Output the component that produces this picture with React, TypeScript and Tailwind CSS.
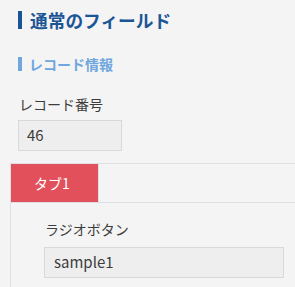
import React from "react";

const font = { fontFamily: '"Noto Sans CJK JP", "Noto Sans", sans-serif' };

export default function App() {
  return (
    <div
      className="w-[295px] h-[287px] overflow-hidden bg-[#f4f4f4] pl-[18px] pt-[11px] text-[#3c3c3c]"
      style={font}
    >
      <div className="flex items-center h-[18px]">
        <div className="w-[4px] h-[18px] bg-[#1b5596]" />
        <div className="ml-[8px] text-[17.7px] leading-[18px] font-bold text-[#1b5596] whitespace-nowrap">
          通常のフィールド
        </div>
      </div>
      <div className="flex items-center h-[14px] mt-[28px]">
        <div className="w-[4px] h-[14px] bg-[#6fa6dd]" />
        <div className="ml-[7px] text-[14px] leading-[14px] font-bold text-[#6fa6dd] whitespace-nowrap">
          レコード情報
        </div>
      </div>
      <div className="mt-[23px] ml-px text-[14px] leading-[20px] text-[#3c3c3c]">レコード番号</div>
      <div className="mt-[6px] w-[104px] h-[31px] border border-[#d9d9d9] bg-[#eeeeee] pl-[8px] flex items-center text-[15px] text-[#3c3c3c]">
        46
      </div>
      <div className="mt-[12px] -ml-[8px] w-[320px] h-[200px] border border-[#dfe0e6]">
        <div className="flex border-b border-[#dfe0e6]">
          <div className="w-[82px] h-[38px] bg-[#e2515b] text-white text-[14px] flex items-center justify-center pr-[5px] border-r border-[#dfe0e6] box-content">
            タブ1
          </div>
        </div>
        <div className="pl-[33px] pt-[16px]">
          <div className="ml-px text-[14px] leading-[20px] text-[#3c3c3c]">ラジオボタン</div>
          <div className="mt-[8px] w-[240px] h-[31px] border border-[#d9d9d9] bg-[#eeeeee] pl-[9px] flex items-center text-[15px] text-[#3c3c3c]">
            sample1
          </div>
        </div>
      </div>
    </div>
  );
}
